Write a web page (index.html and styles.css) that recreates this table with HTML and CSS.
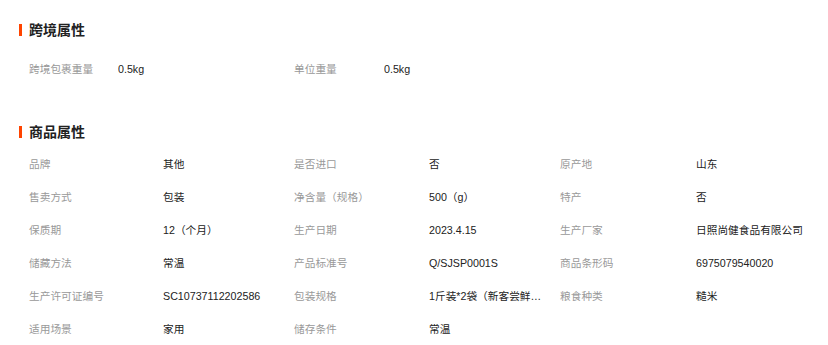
FILE: index.html
```html
<!DOCTYPE html>
<html lang="zh-CN">
<head>
<meta charset="utf-8">
<link rel="stylesheet" href="styles.css">
</head>
<body>
<section class="block block-cross">
  <h2 class="title">跨境属性</h2>
  <div class="cross-grid">
    <span class="label">跨境包裹重量</span><span class="value">0.5kg</span>
    <span class="label">单位重量</span><span class="value">0.5kg</span>
  </div>
</section>
<section class="block block-goods">
  <h2 class="title">商品属性</h2>
  <div class="attr-grid">
    <span class="label">品牌</span><span class="value">其他</span>
    <span class="label">是否进口</span><span class="value">否</span>
    <span class="label">原产地</span><span class="value">山东</span>

    <span class="label">售卖方式</span><span class="value">包装</span>
    <span class="label">净含量（规格）</span><span class="value">500（g）</span>
    <span class="label">特产</span><span class="value">否</span>

    <span class="label">保质期</span><span class="value">12（个月）</span>
    <span class="label">生产日期</span><span class="value">2023.4.15</span>
    <span class="label">生产厂家</span><span class="value">日照尚健食品有限公司</span>

    <span class="label">储藏方法</span><span class="value">常温</span>
    <span class="label">产品标准号</span><span class="value">Q/SJSP0001S</span>
    <span class="label">商品条形码</span><span class="value">6975079540020</span>

    <span class="label">生产许可证编号</span><span class="value">SC10737112202586</span>
    <span class="label">包装规格</span><span class="value">1斤装*2袋（新客尝鲜装）</span>
    <span class="label">粮食种类</span><span class="value">糙米</span>

    <span class="label">适用场景</span><span class="value">家用</span>
    <span class="label">储存条件</span><span class="value">常温</span>
  </div>
</section>
</body>
</html>
```
FILE: styles.css
```css
* { box-sizing: border-box; }
html, body { margin: 0; padding: 0; background: #fff; }
body {
  font-family: "Liberation Sans", "Noto Sans CJK SC", sans-serif;
  font-size: 10.7px;
  color: #333;
  padding: 23px 0 0 19px;
}
.title {
  margin: 0;
  display: flex;
  align-items: center;
  height: 14px;
  font-size: 14px;
  font-weight: bold;
  color: #222;
  line-height: 14px;
}
.title::before {
  content: "";
  width: 3px;
  height: 12px;
  background: #ff4400;
  margin-right: 7px;
}
.block-cross { height: 102px; }
.cross-grid {
  display: grid;
  grid-template-columns: 89px 176px 90px 150px;
  padding: 24px 0 0 10px;
  line-height: 16px;
}
.attr-grid {
  display: grid;
  grid-template-columns: 134px 131px 135px 131px 136px 130px;
  grid-auto-rows: 33px;
  padding: 17px 0 0 10px;
  line-height: 16px;
}
.label { color: #999; white-space: nowrap; }
.value {
  color: #222;
  white-space: nowrap;
  overflow: hidden;
  text-overflow: ellipsis;
  padding-right: 14px;
}
```
